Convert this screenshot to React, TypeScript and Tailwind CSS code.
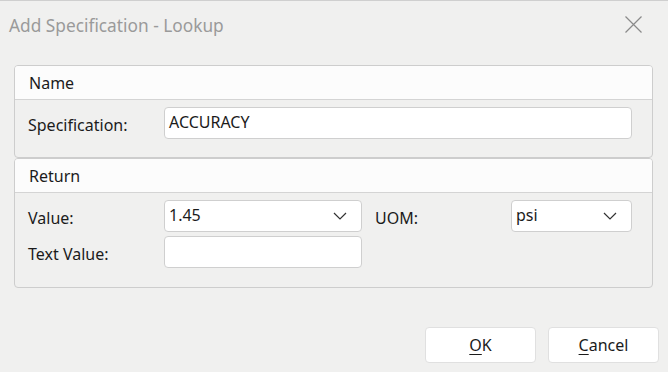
import { ReactNode } from "react";

const font = { fontFamily: '"Noto Sans", "Open Sans", sans-serif' };

const Chevron = () => (
  <svg width="14" height="8" viewBox="0 0 14 8" fill="none" className="shrink-0">
    <path d="M1 1l6 6 6-6" stroke="#333" strokeWidth="1.2" />
  </svg>
);

const Group = ({ title, children }: { title: string; children: ReactNode }) => (
  <div className="border border-[#cdcdcd] rounded-[4px] overflow-hidden">
    <div className="h-[34px] bg-[#fcfcfc] border-b border-[#d4d4d4] flex items-center pl-[14px] text-[16px] text-[#1b1b1b]">
      {title}
    </div>
    {children}
  </div>
);

const Input = ({ value, w, select }: { value?: string; w: string; select?: boolean }) => (
  <div
    className={`${w} h-[32px] bg-white border border-[#cfcfcf] rounded-[4px] flex items-center justify-between pl-[4px] pr-[14px] text-[16px] text-[#1b1b1b]`}
  >
    <span className="-mt-[3px]">{value}</span>
    {select && <Chevron />}
  </div>
);

const Label = ({ children, w }: { children: ReactNode; w: string }) => (
  <div className={`${w} pt-[6px] text-[16px] text-[#1b1b1b]`}>{children}</div>
);

export default function App() {
  return (
    <div style={font} className="w-[668px] h-[372px] bg-[#f0f0ef] border-t border-[#cfcfcf] flex flex-col">
      <div className="h-[47px] flex items-center justify-between pl-[9px] pr-[26px]">
        <span className="text-[17.3px] text-[#9a9a9a] mt-[2px]">Add Specification - Lookup</span>
        <svg width="17" height="17" viewBox="0 0 17 17" fill="none">
          <path d="M0.5 0.5l16 16M16.5 0.5l-16 16" stroke="#8a8a8a" strokeWidth="1.2" />
        </svg>
      </div>

      <div className="pl-[14px] pr-[15px] pt-[17px]">
        <Group title="Name">
          <div className="h-[57px] flex items-start pt-[7px] pl-[13px]">
            <Label w="w-[136px]">Specification:</Label>
            <Input w="w-[468px]" value="ACCURACY" />
          </div>
        </Group>
        <Group title="Return">
          <div className="flex flex-col gap-[4px] pt-[7px] pb-[19px] pl-[13px]">
            <div className="flex items-start">
              <Label w="w-[136px]">Value:</Label>
              <Input w="w-[198px]" value="1.45" select />
              <Label w="w-[149px] pl-[13px]">UOM:</Label>
              <Input w="w-[121px]" value="psi" select />
            </div>
            <div className="flex items-start">
              <Label w="w-[136px]">Text Value:</Label>
              <Input w="w-[198px]" />
            </div>
          </div>
        </Group>
      </div>

      <div className="mt-auto mb-[9px] flex justify-end gap-[12px] pr-[9px]">
        <button className="w-[111px] h-[36px] bg-white border border-[#e0e0e0] rounded-[4px] text-[16px] text-[#1b1b1b]">
          <span className="underline underline-offset-[3px]">O</span>K
        </button>
        <button className="w-[111px] h-[36px] bg-white border border-[#e0e0e0] rounded-[4px] text-[16px] text-[#1b1b1b]">
          <span className="underline underline-offset-[3px]">C</span>ancel
        </button>
      </div>
    </div>
  );
}
